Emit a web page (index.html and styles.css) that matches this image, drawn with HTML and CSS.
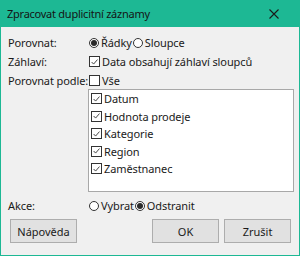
FILE: index.html
```html
<!DOCTYPE html>
<html>
<head>
<meta charset="utf-8">
<link rel="stylesheet" href="styles.css">
</head>
<body>
<div class="window">
  <div class="titlebar">
    <span class="title">Zpracovat duplicitní záznamy</span>
    <svg class="close" width="10" height="10" viewBox="0 0 10 10"><path d="M0.5 0.5 L9.5 9.5 M9.5 0.5 L0.5 9.5" stroke="#1a1a1a" stroke-width="1.1" fill="none"/></svg>
  </div>
  <div class="content">
    <div class="row">
      <span class="label">Porovnat:</span>
      <div class="controls">
        <span class="opt"><span class="radio on"></span>Řádky</span>
        <span class="opt"><span class="radio"></span>Sloupce</span>
      </div>
    </div>
    <div class="row">
      <span class="label">Záhlaví:</span>
      <div class="controls">
        <span class="opt"><span class="check on"><svg width="10" height="10" viewBox="0 0 10 10"><path d="M1.8 5 L4 7.3 L8.3 2.3" stroke="#333" stroke-width="1" fill="none"/></svg></span>Data obsahují záhlaví sloupců</span>
      </div>
    </div>
    <div class="row">
      <span class="label">Porovnat podle:</span>
      <div class="controls">
        <span class="opt"><span class="check"></span>Vše</span>
      </div>
    </div>
    <div class="listrow">
      <div class="listbox">
        <div class="item"><span class="check on"><svg width="10" height="10" viewBox="0 0 10 10"><path d="M1.8 5 L4 7.3 L8.3 2.3" stroke="#333" stroke-width="1" fill="none"/></svg></span>Datum</div>
        <div class="item"><span class="check on"><svg width="10" height="10" viewBox="0 0 10 10"><path d="M1.8 5 L4 7.3 L8.3 2.3" stroke="#333" stroke-width="1" fill="none"/></svg></span>Hodnota prodeje</div>
        <div class="item"><span class="check on"><svg width="10" height="10" viewBox="0 0 10 10"><path d="M1.8 5 L4 7.3 L8.3 2.3" stroke="#333" stroke-width="1" fill="none"/></svg></span>Kategorie</div>
        <div class="item"><span class="check on"><svg width="10" height="10" viewBox="0 0 10 10"><path d="M1.8 5 L4 7.3 L8.3 2.3" stroke="#333" stroke-width="1" fill="none"/></svg></span>Region</div>
        <div class="item"><span class="check on"><svg width="10" height="10" viewBox="0 0 10 10"><path d="M1.8 5 L4 7.3 L8.3 2.3" stroke="#333" stroke-width="1" fill="none"/></svg></span>Zaměstnanec</div>
      </div>
    </div>
    <div class="row akce">
      <span class="label">Akce:</span>
      <div class="controls">
        <span class="opt"><span class="radio"></span>Vybrat</span>
        <span class="opt"><span class="radio on"></span>Odstranit</span>
      </div>
    </div>
    <div class="buttons">
      <button class="btn">Nápověda</button>
      <div class="right">
        <button class="btn">OK</button>
        <button class="btn">Zrušit</button>
      </div>
    </div>
  </div>
</div>
</body>
</html>
```
FILE: styles.css
```css
* { box-sizing: border-box; }
html, body { margin: 0; padding: 0; }
body {
  width: 300px;
  height: 256px;
  font-family: "Noto Sans", "Open Sans", sans-serif;
  font-size: 11px;
  color: #1a1a1a;
  background: #ffffff;
}
.window {
  width: 300px;
  height: 256px;
  border: 1px solid #1db894;
  border-top: none;
  background: #f0f0f0;
  display: flex;
  flex-direction: column;
}
.titlebar {
  height: 27px;
  background: #1db894;
  display: flex;
  align-items: center;
  justify-content: space-between;
  padding: 0 21px 0 7px;
  margin: 0 -1px;
}
.title {
  font-size: 11px;
  color: #141414;
  letter-spacing: -0.25px;
  white-space: nowrap;
}
.close { display: block; }
.content {
  padding: 6px 0 0 7px;
  display: flex;
  flex-direction: column;
  flex: 1;
}
.row {
  display: flex;
  align-items: center;
  height: 19px;
}
.label {
  width: 80px;
  flex: none;
  white-space: nowrap;
  letter-spacing: -0.1px;
}
.controls {
  display: flex;
  align-items: center;
}
.opt {
  display: flex;
  align-items: center;
  white-space: nowrap;
  letter-spacing: -0.1px;
}
.radio {
  width: 10px;
  height: 10px;
  border: 1px solid #333;
  border-radius: 50%;
  margin: 0 2px 0 1px;
  background: #fff;
  position: relative;
  flex: none;
}
.radio.on::after {
  content: "";
  position: absolute;
  left: 1px;
  top: 1px;
  width: 6px;
  height: 6px;
  border-radius: 50%;
  background: #2a2a2a;
}
.check {
  width: 11px;
  height: 11px;
  border: 1px solid #333;
  margin: 0 2px 0 1px;
  background: #fff;
  flex: none;
  display: flex;
  align-items: center;
  justify-content: center;
}
.check svg { display: block; }
.listrow {
  padding-left: 80px;
  margin-top: -1px;
}
.listbox {
  width: 206px;
  height: 103px;
  background: #fff;
  border: 1px solid #a8a8a8;
  padding: 0 0 0 1px;
}
.item {
  display: flex;
  align-items: center;
  height: 17.5px;
  white-space: nowrap;
  letter-spacing: -0.1px;
}
.akce {
  margin-top: 4px;
}
.buttons {
  display: flex;
  justify-content: space-between;
  margin-top: 4px;
  padding-left: 2px;
  padding-right: 8px;
}
.right {
  display: flex;
  gap: 5px;
}
.btn {
  width: 67px;
  height: 24px;
  font-family: inherit;
  font-size: 11px;
  color: #1a1a1a;
  background: #e1e1e1;
  border: 1px solid #adadad;
  padding: 0;
}
```
